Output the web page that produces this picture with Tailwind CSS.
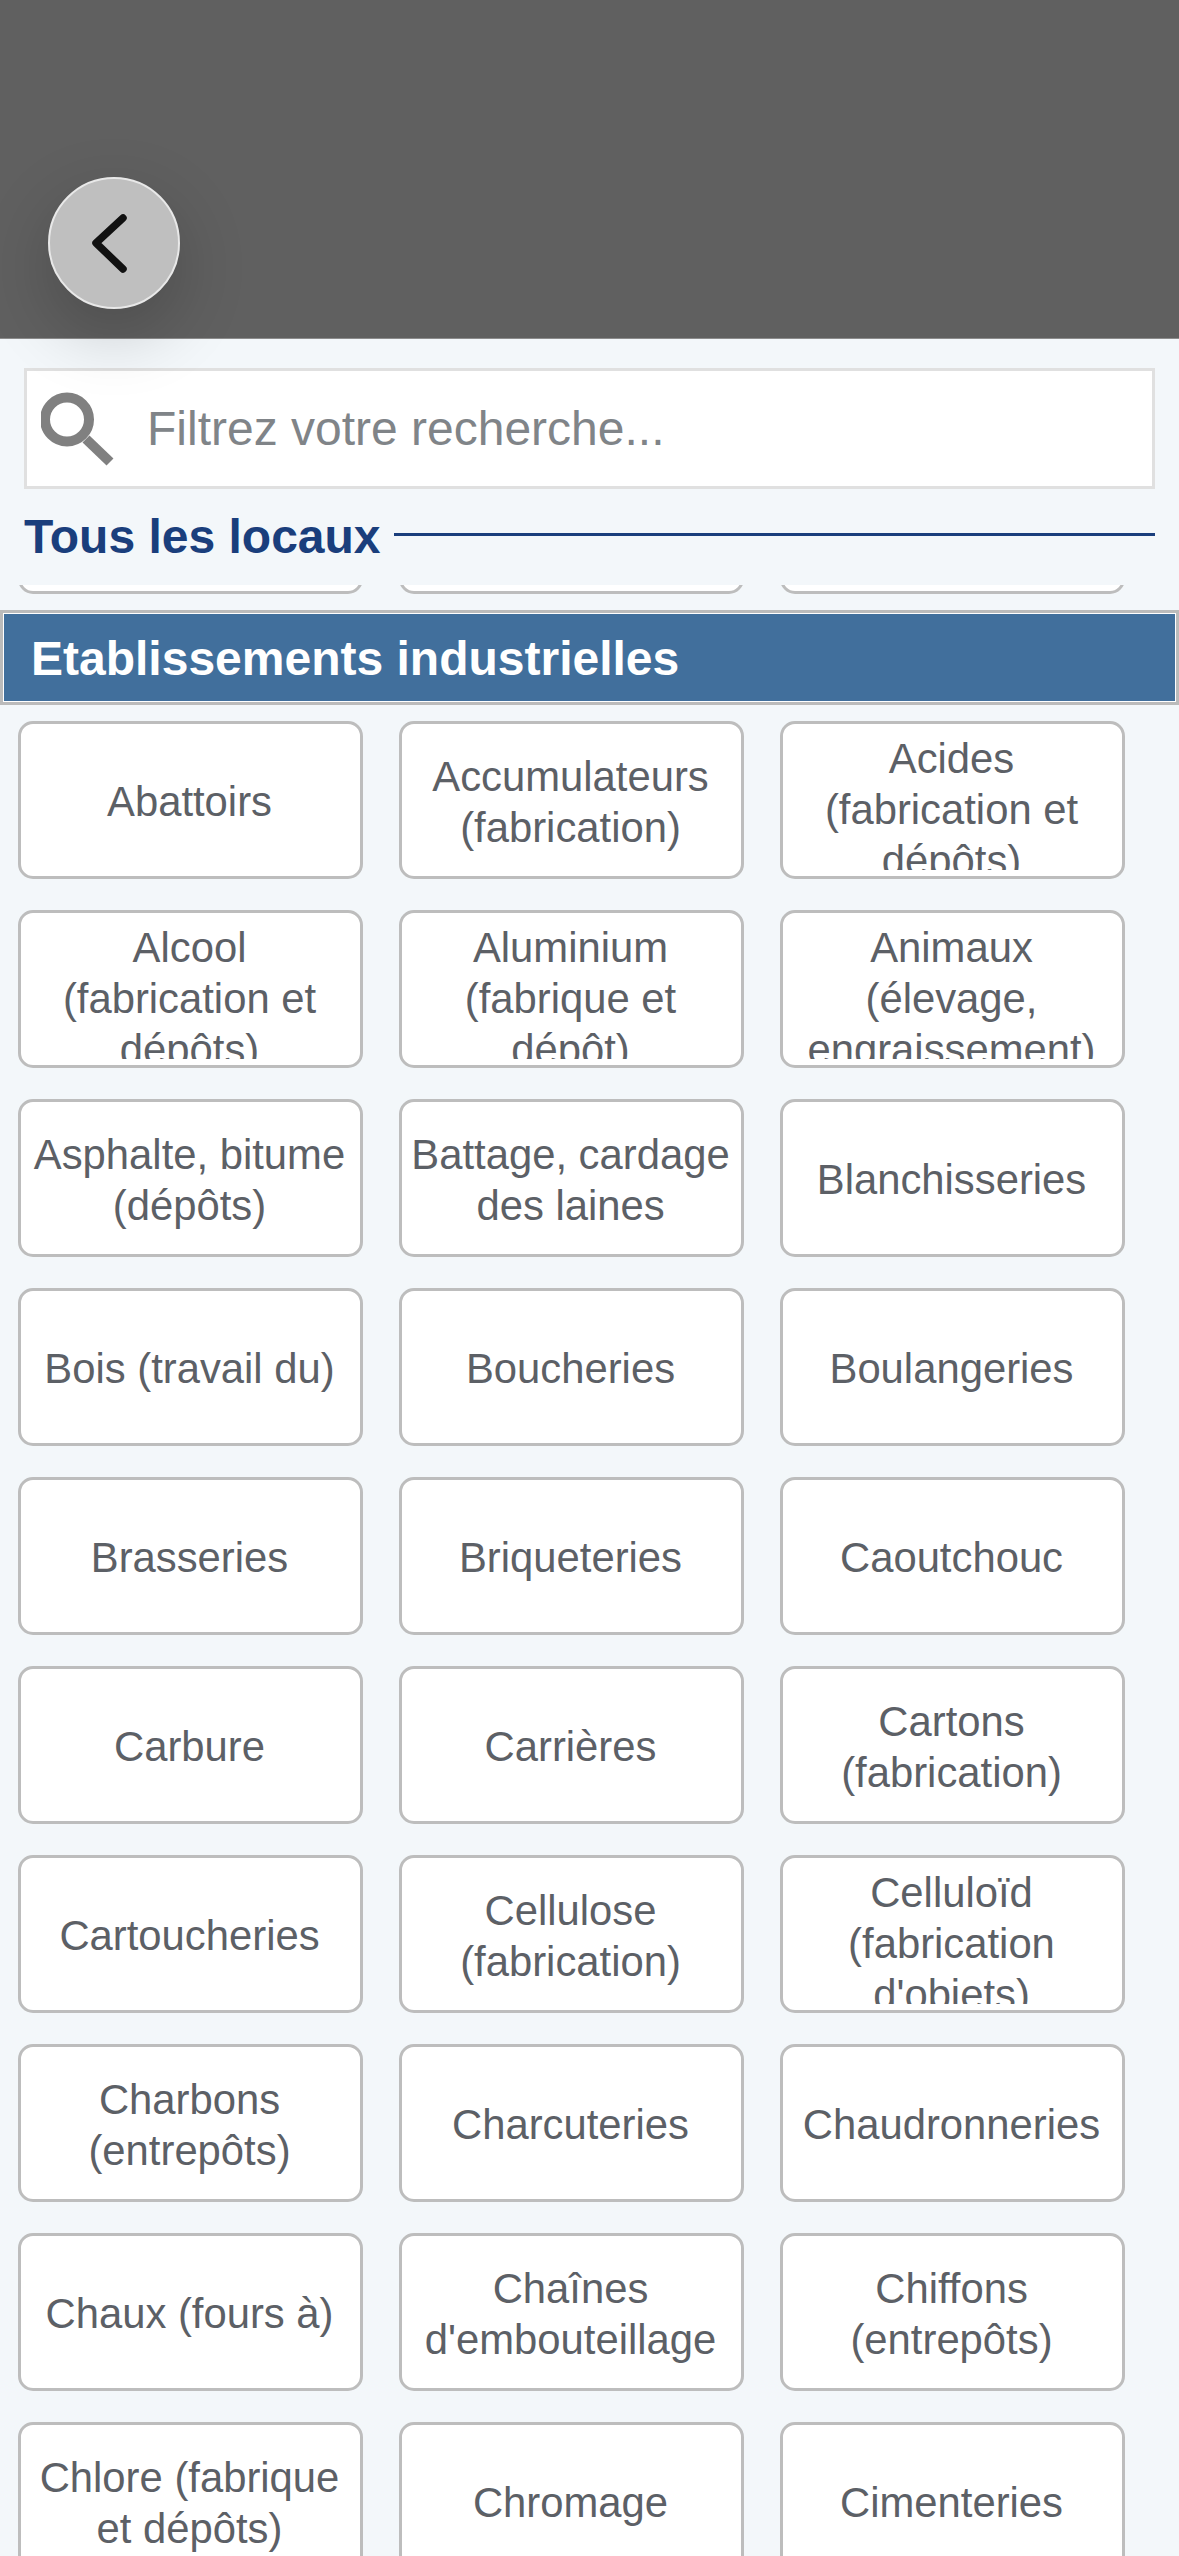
<!DOCTYPE html>
<html lang="fr">

<head>
  <meta charset="UTF-8" />
  <meta name="viewport" content="width=device-width, initial-scale=1.0" />
  <title>Tous les locaux</title>
  <script src="https://cdn.jsdelivr.net/npm/@tailwindcss/browser@4"></script>
</head>

<body class="bg-[#f3f7fa] font-['Liberation_Sans',Arial,sans-serif]">
  <div class="w-[1179px] h-[2556px] overflow-hidden flex flex-col">

    <!-- Header with back button -->
    <header class="h-[339px] shrink-0 bg-[#606060] border-b border-[#8c8c8c] pl-[48px] pt-[177px] relative z-10">
      <button class="w-[132px] h-[132px] rounded-full bg-[#bfbfbf] border-[2px] border-[#e8e8e8] flex items-center justify-center shadow-[0_24px_70px_rgba(0,0,0,0.2)]">
        <svg width="128" height="128" viewBox="0 0 128 128" fill="none">
          <path d="M73 39 L46 64 L73 90" stroke="#111" stroke-width="7.5" stroke-linecap="round" stroke-linejoin="round" />
        </svg>
      </button>
    </header>

    <!-- Search -->
    <div class="px-[24px] pt-[29px] shrink-0">
      <div class="h-[121px] bg-white border-[3px] border-[#e0e0e0] flex items-center">
        <svg class="ml-[14px] shrink-0" width="76" height="76" viewBox="0 0 76 76" fill="none">
          <circle cx="26" cy="28.5" r="22" stroke="#808080" stroke-width="10" />
          <path d="M45 48 L69 71" stroke="#808080" stroke-width="10" />
        </svg>
        <input type="text" placeholder="Filtrez votre recherche..." class="ml-[30px] flex-1 min-w-0 bg-transparent outline-none text-[48px] text-[#55595e] placeholder:text-[#808488]" />
      </div>
    </div>

    <!-- Title with rule -->
    <div class="px-[24px] pt-[22px] h-[74px] shrink-0 flex items-center gap-[13px]">
      <h1 class="text-[48px] leading-[52px] font-bold text-[#1a3e7c] whitespace-nowrap">Tous les locaux</h1>
      <div class="flex-1 h-[3px] bg-[#1a3e7c] -mt-[6px]"></div>
    </div>

    <!-- Scrolled list -->
    <div class="flex-1 overflow-hidden mt-[22px]">
      <div class="-mt-[149px] pl-[18px] grid grid-cols-[repeat(3,345px)] gap-x-[36px]">
        <div class="h-[158px] bg-white border-[3px] border-[#bdbdbd] rounded-[15px]"></div>
        <div class="h-[158px] bg-white border-[3px] border-[#bdbdbd] rounded-[15px]"></div>
        <div class="h-[158px] bg-white border-[3px] border-[#bdbdbd] rounded-[15px]"></div>
      </div>

      <h2 class="mt-[16px] h-[95px] flex items-center pl-[28px] pt-[2px] bg-[#416f9c] border-[3px] border-[#bbbbbb] shadow-[inset_0_0_0_1px_#ffffff] text-[48px] font-bold text-white">Etablissements industrielles</h2>

      <div class="mt-[16px] pl-[18px] grid grid-cols-[repeat(3,345px)] gap-x-[36px] gap-y-[31px] text-[41.8px] leading-[51px] text-[#5c6066] text-center">
        <div class="h-[158px] bg-white border-[3px] border-[#bdbdbd] rounded-[15px] pl-[5px] pr-[7px] pt-[9px] pb-[6px]"><div class="h-full overflow-hidden flex items-center-safe justify-center">Abattoirs</div></div>
        <div class="h-[158px] bg-white border-[3px] border-[#bdbdbd] rounded-[15px] pl-[5px] pr-[7px] pt-[9px] pb-[6px]"><div class="h-full overflow-hidden flex items-center-safe justify-center">Accumulateurs (fabrication)</div></div>
        <div class="h-[158px] bg-white border-[3px] border-[#bdbdbd] rounded-[15px] pl-[5px] pr-[7px] pt-[9px] pb-[6px]"><div class="h-full overflow-hidden flex items-center-safe justify-center">Acides (fabrication et dépôts)</div></div>

        <div class="h-[158px] bg-white border-[3px] border-[#bdbdbd] rounded-[15px] pl-[5px] pr-[7px] pt-[9px] pb-[6px]"><div class="h-full overflow-hidden flex items-center-safe justify-center">Alcool (fabrication et dépôts)</div></div>
        <div class="h-[158px] bg-white border-[3px] border-[#bdbdbd] rounded-[15px] pl-[5px] pr-[7px] pt-[9px] pb-[6px]"><div class="h-full overflow-hidden flex items-center-safe justify-center">Aluminium (fabrique et dépôt)</div></div>
        <div class="h-[158px] bg-white border-[3px] border-[#bdbdbd] rounded-[15px] pl-[5px] pr-[7px] pt-[9px] pb-[6px]"><div class="h-full overflow-hidden flex items-center-safe justify-center">Animaux (élevage, engraissement)</div></div>

        <div class="h-[158px] bg-white border-[3px] border-[#bdbdbd] rounded-[15px] pl-[5px] pr-[7px] pt-[9px] pb-[6px]"><div class="h-full overflow-hidden flex items-center-safe justify-center">Asphalte, bitume (dépôts)</div></div>
        <div class="h-[158px] bg-white border-[3px] border-[#bdbdbd] rounded-[15px] pl-[5px] pr-[7px] pt-[9px] pb-[6px]"><div class="h-full overflow-hidden flex items-center-safe justify-center">Battage, cardage des laines</div></div>
        <div class="h-[158px] bg-white border-[3px] border-[#bdbdbd] rounded-[15px] pl-[5px] pr-[7px] pt-[9px] pb-[6px]"><div class="h-full overflow-hidden flex items-center-safe justify-center">Blanchisseries</div></div>

        <div class="h-[158px] bg-white border-[3px] border-[#bdbdbd] rounded-[15px] pl-[5px] pr-[7px] pt-[9px] pb-[6px]"><div class="h-full overflow-hidden flex items-center-safe justify-center">Bois (travail du)</div></div>
        <div class="h-[158px] bg-white border-[3px] border-[#bdbdbd] rounded-[15px] pl-[5px] pr-[7px] pt-[9px] pb-[6px]"><div class="h-full overflow-hidden flex items-center-safe justify-center">Boucheries</div></div>
        <div class="h-[158px] bg-white border-[3px] border-[#bdbdbd] rounded-[15px] pl-[5px] pr-[7px] pt-[9px] pb-[6px]"><div class="h-full overflow-hidden flex items-center-safe justify-center">Boulangeries</div></div>

        <div class="h-[158px] bg-white border-[3px] border-[#bdbdbd] rounded-[15px] pl-[5px] pr-[7px] pt-[9px] pb-[6px]"><div class="h-full overflow-hidden flex items-center-safe justify-center">Brasseries</div></div>
        <div class="h-[158px] bg-white border-[3px] border-[#bdbdbd] rounded-[15px] pl-[5px] pr-[7px] pt-[9px] pb-[6px]"><div class="h-full overflow-hidden flex items-center-safe justify-center">Briqueteries</div></div>
        <div class="h-[158px] bg-white border-[3px] border-[#bdbdbd] rounded-[15px] pl-[5px] pr-[7px] pt-[9px] pb-[6px]"><div class="h-full overflow-hidden flex items-center-safe justify-center">Caoutchouc</div></div>

        <div class="h-[158px] bg-white border-[3px] border-[#bdbdbd] rounded-[15px] pl-[5px] pr-[7px] pt-[9px] pb-[6px]"><div class="h-full overflow-hidden flex items-center-safe justify-center">Carbure</div></div>
        <div class="h-[158px] bg-white border-[3px] border-[#bdbdbd] rounded-[15px] pl-[5px] pr-[7px] pt-[9px] pb-[6px]"><div class="h-full overflow-hidden flex items-center-safe justify-center">Carrières</div></div>
        <div class="h-[158px] bg-white border-[3px] border-[#bdbdbd] rounded-[15px] pl-[5px] pr-[7px] pt-[9px] pb-[6px]"><div class="h-full overflow-hidden flex items-center-safe justify-center">Cartons (fabrication)</div></div>

        <div class="h-[158px] bg-white border-[3px] border-[#bdbdbd] rounded-[15px] pl-[5px] pr-[7px] pt-[9px] pb-[6px]"><div class="h-full overflow-hidden flex items-center-safe justify-center">Cartoucheries</div></div>
        <div class="h-[158px] bg-white border-[3px] border-[#bdbdbd] rounded-[15px] pl-[5px] pr-[7px] pt-[9px] pb-[6px]"><div class="h-full overflow-hidden flex items-center-safe justify-center">Cellulose (fabrication)</div></div>
        <div class="h-[158px] bg-white border-[3px] border-[#bdbdbd] rounded-[15px] pl-[5px] pr-[7px] pt-[9px] pb-[6px]"><div class="h-full overflow-hidden flex items-center-safe justify-center">Celluloïd (fabrication d'objets)</div></div>

        <div class="h-[158px] bg-white border-[3px] border-[#bdbdbd] rounded-[15px] pl-[5px] pr-[7px] pt-[9px] pb-[6px]"><div class="h-full overflow-hidden flex items-center-safe justify-center">Charbons (entrepôts)</div></div>
        <div class="h-[158px] bg-white border-[3px] border-[#bdbdbd] rounded-[15px] pl-[5px] pr-[7px] pt-[9px] pb-[6px]"><div class="h-full overflow-hidden flex items-center-safe justify-center">Charcuteries</div></div>
        <div class="h-[158px] bg-white border-[3px] border-[#bdbdbd] rounded-[15px] pl-[5px] pr-[7px] pt-[9px] pb-[6px]"><div class="h-full overflow-hidden flex items-center-safe justify-center">Chaudronneries</div></div>

        <div class="h-[158px] bg-white border-[3px] border-[#bdbdbd] rounded-[15px] pl-[5px] pr-[7px] pt-[9px] pb-[6px]"><div class="h-full overflow-hidden flex items-center-safe justify-center">Chaux (fours à)</div></div>
        <div class="h-[158px] bg-white border-[3px] border-[#bdbdbd] rounded-[15px] pl-[5px] pr-[7px] pt-[9px] pb-[6px]"><div class="h-full overflow-hidden flex items-center-safe justify-center">Chaînes d'embouteillage</div></div>
        <div class="h-[158px] bg-white border-[3px] border-[#bdbdbd] rounded-[15px] pl-[5px] pr-[7px] pt-[9px] pb-[6px]"><div class="h-full overflow-hidden flex items-center-safe justify-center">Chiffons (entrepôts)</div></div>

        <div class="h-[158px] bg-white border-[3px] border-[#bdbdbd] rounded-[15px] pl-[5px] pr-[7px] pt-[9px] pb-[6px]"><div class="h-full overflow-hidden flex items-center-safe justify-center">Chlore (fabrique et dépôts)</div></div>
        <div class="h-[158px] bg-white border-[3px] border-[#bdbdbd] rounded-[15px] pl-[5px] pr-[7px] pt-[9px] pb-[6px]"><div class="h-full overflow-hidden flex items-center-safe justify-center">Chromage</div></div>
        <div class="h-[158px] bg-white border-[3px] border-[#bdbdbd] rounded-[15px] pl-[5px] pr-[7px] pt-[9px] pb-[6px]"><div class="h-full overflow-hidden flex items-center-safe justify-center">Cimenteries</div></div>
      </div>
    </div>
  </div>
</body>

</html>
